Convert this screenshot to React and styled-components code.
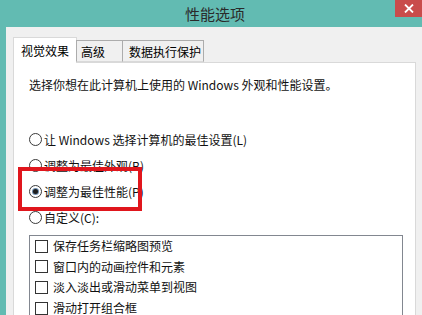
import React from 'react';
import styled, { createGlobalStyle } from 'styled-components';

const GlobalStyle = createGlobalStyle`
  html, body {
    margin: 0;
    padding: 0;
    background: #62bbb2;
  }
  body {
    font-family: "Noto Sans CJK SC", "Noto Sans", sans-serif;
    font-size: 12px;
    color: #1a1a1a;
  }
`;

const Window = styled.div`
  width: 422px;
  height: 315px;
  overflow: hidden;
  background: #62bbb2;
  display: flex;
  flex-direction: column;
`;

const TitleBar = styled.div`
  position: relative;
  height: 27px;
  flex: none;
  display: flex;
  align-items: center;
  justify-content: center;
  padding-left: 8px;
  font-size: 15px;
  color: #2a2a2a;
`;

const CloseButton = styled.div`
  position: absolute;
  top: 0;
  right: 0;
  width: 27px;
  height: 17px;
  background: #c94c4b;
  display: flex;
  align-items: center;
  justify-content: center;
`;

const Body = styled.div`
  flex: 1;
  margin-left: 6px;
  background: #f0f0f0;
  padding: 10px 0 0 7px;
  display: flex;
  flex-direction: column;
  min-height: 0;
`;

const TabRow = styled.div`
  display: flex;
  align-items: flex-end;
  height: 25px;
  flex: none;
  position: relative;
  z-index: 1;
`;

const Tab = styled.div`
  width: ${({ w }) => w}px;
  box-sizing: border-box;
  height: ${({ active }) => (active ? 26 : 22)}px;
  background: ${({ active }) => (active ? '#fff' : '#f0f0f0')};
  border: 1px solid ${({ active }) => (active ? '#d9d9d9' : '#acacac')};
  border-bottom: ${({ active }) => (active ? 'none' : '1px solid #d9d9d9')};
  margin-left: ${({ active }) => (active ? 0 : -1)}px;
  margin-bottom: ${({ active }) => (active ? -1 : 0)}px;
  padding-left: ${({ pad }) => pad}px;
  display: flex;
  align-items: center;
  color: #000;
  white-space: nowrap;
`;

const Panel = styled.div`
  position: relative;
  width: 403px;
  flex: 1;
  min-height: 0;
  box-sizing: border-box;
  background: #fff;
  border: 1px solid #d9d9d9;
  border-bottom: none;
  padding: 12px 0 0 15px;
  display: flex;
  flex-direction: column;
`;

const Intro = styled.div`
  line-height: 20px;
  color: #111;
  margin-bottom: 35px;
`;

const RadioList = styled.div`
  display: flex;
  flex-direction: column;
  gap: 7px;
`;

const RadioRow = styled.div`
  display: flex;
  align-items: center;
  height: 19px;
  gap: 2px;
  color: #111;
  white-space: nowrap;
`;

const RadioDot = styled.span`
  width: 13px;
  height: 13px;
  box-sizing: border-box;
  border-radius: 50%;
  border: 1px solid #3a3a3a;
  background: #fff;
  display: flex;
  align-items: center;
  justify-content: center;
  flex: none;

  &::after {
    content: '';
    display: ${({ checked }) => (checked ? 'block' : 'none')};
    width: 5px;
    height: 5px;
    border-radius: 50%;
    background: #1c1c1c;
    box-shadow: 0 0 0 1px #6f8fb0;
  }
`;

const ListBox = styled.div`
  margin-top: 8px;
  width: 374px;
  flex: 1;
  box-sizing: border-box;
  border: 1px solid #828790;
  border-bottom: none;
  padding: 0 0 0 5px;
  display: flex;
  flex-direction: column;
`;

const CheckRow = styled.div`
  display: flex;
  align-items: center;
  flex: none;
  height: 20.6px;
  line-height: 16px;
  gap: 5px;
  color: #111;
  white-space: nowrap;
`;

const CheckBox = styled.span`
  width: 13px;
  height: 13px;
  box-sizing: border-box;
  border: 1px solid #333;
  background: #fff;
  flex: none;
`;

const Highlight = styled.div`
  position: absolute;
  left: 4px;
  top: 104px;
  width: 124px;
  height: 44px;
  box-sizing: border-box;
  border: 4px solid #e0161d;
  pointer-events: none;
`;

const radios = [
  { label: '让 Windows 选择计算机的最佳设置(L)' },
  { label: '调整为最佳外观(B)' },
  { label: '调整为最佳性能(P)', checked: true },
  { label: '自定义(C):' },
];

const checks = [
  '保存任务栏缩略图预览',
  '窗口内的动画控件和元素',
  '淡入淡出或滑动菜单到视图',
  '滑动打开组合框',
];

export default function App() {
  return (
    <>
      <GlobalStyle />
      <Window>
        <TitleBar>
          性能选项
          <CloseButton>
            <svg width="10" height="9" viewBox="0 0 10 9">
              <path d="M1 0.5 L9 8.5 M9 0.5 L1 8.5" stroke="#fff" strokeWidth="1.8" />
            </svg>
          </CloseButton>
        </TitleBar>
        <Body>
          <TabRow>
            <Tab active w={64} pad={7}>视觉效果</Tab>
            <Tab w={47} pad={4}>高级</Tab>
            <Tab w={82} pad={6}>数据执行保护</Tab>
          </TabRow>
          <Panel>
            <Intro>选择你想在此计算机上使用的 Windows 外观和性能设置。</Intro>
            <RadioList>
              {radios.map((r) => (
                <RadioRow key={r.label}>
                  <RadioDot checked={r.checked} />
                  {r.label}
                </RadioRow>
              ))}
            </RadioList>
            <ListBox>
              {checks.map((c) => (
                <CheckRow key={c}>
                  <CheckBox />
                  {c}
                </CheckRow>
              ))}
            </ListBox>
            <Highlight />
          </Panel>
        </Body>
      </Window>
    </>
  );
}
